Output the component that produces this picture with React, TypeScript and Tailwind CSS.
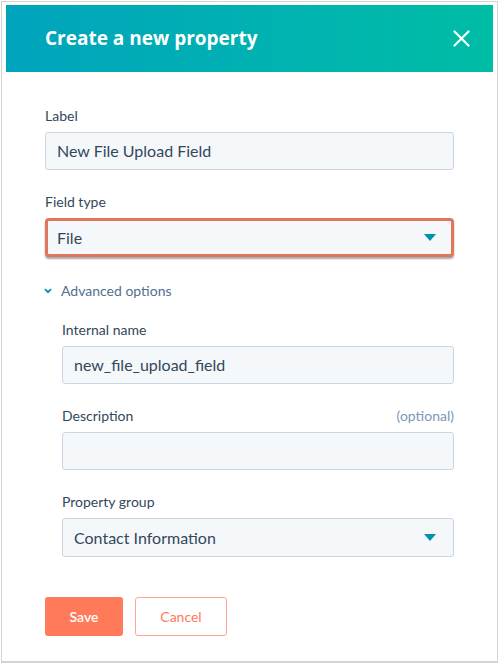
import React from "react";

const font = { fontFamily: '"Lato", "Open Sans", sans-serif' };

function Caret() {
  return (
    <svg width="12" height="7" viewBox="0 0 12 7" className="shrink-0">
      <path d="M0 0 H12 L6 7 Z" fill="#0091ae" />
    </svg>
  );
}

function Field({
  label,
  optional,
  children,
}: {
  label: string;
  optional?: boolean;
  children: React.ReactNode;
}) {
  return (
    <div className="flex flex-col">
      <div className="mb-[6px] flex items-center justify-between text-[14px] leading-5 text-[#33475b]">
        <span>{label}</span>
        {optional && <span className="text-[#7c98b6]">(optional)</span>}
      </div>
      {children}
    </div>
  );
}

function Input({ value }: { value?: string }) {
  return (
    <div className="flex h-[38px] items-center rounded-[3px] border border-[#cbd6e2] bg-[#f5f8fa] px-[11px] text-[16px] text-[#33475b]">
      {value}
    </div>
  );
}

function Select({ value, highlight }: { value: string; highlight?: boolean }) {
  return (
    <div
      className={
        highlight
          ? "flex h-[39px] items-center justify-between rounded-[4px] border-[3px] border-[#e0765a] bg-[#f5f8fa] pl-[9px] pr-[15px] text-[16px] text-[#33475b] shadow-[0_2px_2px_rgba(0,0,0,0.35)]"
          : "flex h-[39px] items-center justify-between rounded-[3px] border border-[#cbd6e2] bg-[#f5f8fa] pl-[11px] pr-[17px] text-[16px] text-[#33475b]"
      }
    >
      <span>{value}</span>
      <Caret />
    </div>
  );
}

export default function App() {
  return (
    <div className="h-[665px] w-[500px] bg-white pl-[1px] pt-[1px]" style={font}>
      <div className="flex h-[662px] w-[497px] flex-col border border-b-2 border-[#d4d4d4] px-[4px] pt-[3px]">
        <div className="flex h-[67px] items-center justify-between bg-gradient-to-r from-[#00a4bd] to-[#00bda5] pl-[39px] pr-[23px]">
          <h1
            className="text-[19px] font-bold text-white"
            style={{ fontFamily: '"Open Sans", "Lato", sans-serif' }}
          >
            Create a new property
          </h1>
          <svg width="17" height="17" viewBox="0 0 17 17">
            <path d="M1.5 1.5 L15.5 15.5 M15.5 1.5 L1.5 15.5" stroke="white" strokeWidth="2.2" strokeLinecap="round" />
          </svg>
        </div>
        <div className="flex flex-col px-[39px] pt-[34px]">
          <Field label="Label">
            <Input value="New File Upload Field" />
          </Field>
          <div className="mt-[22px]">
            <Field label="Field type">
              <Select value="File" highlight />
            </Field>
          </div>
          <div className="mt-[24px] flex items-center gap-[9px] text-[14px] leading-5 text-[#516f90]">
            <svg width="8" height="6" viewBox="0 0 8 6" className="ml-[-1px]">
              <path d="M1 1.2 L4 4.2 L7 1.2" fill="none" stroke="#0091ae" strokeWidth="1.8" />
            </svg>
            <span>Advanced options</span>
          </div>
          <div className="mt-[19px] flex flex-col gap-[22px] pl-[17px]">
            <Field label="Internal name">
              <Input value="new_file_upload_field" />
            </Field>
            <Field label="Description" optional>
              <Input />
            </Field>
            <Field label="Property group">
              <Select value="Contact Information" />
            </Field>
          </div>
          <div className="mt-[40px] flex gap-[12px]">
            <button className="h-[39px] w-[78px] rounded-[3px] bg-[#ff7a59] text-[14px] font-semibold text-white">
              Save
            </button>
            <button className="h-[39px] w-[92px] rounded-[3px] border border-[#ffa58c] bg-white text-[14px] text-[#ff7a59]">
              Cancel
            </button>
          </div>
        </div>
      </div>
    </div>
  );
}
